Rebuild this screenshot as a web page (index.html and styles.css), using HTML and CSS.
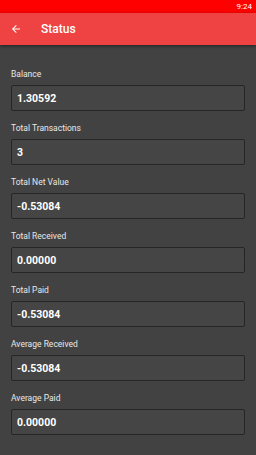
FILE: index.html
```html
<!DOCTYPE html>
<html>
<head>
<meta charset="utf-8">
<link rel="stylesheet" href="styles.css">
</head>
<body>
<div class="statusbar"><span class="time">9:24</span></div>
<div class="toolbar">
  <svg class="back" width="12" height="12" viewBox="0 0 24 24"><path d="M20 11H7.83l5.59-5.59L12 4l-8 8 8 8 1.41-1.41L7.83 13H20v-2z" fill="#fff"/></svg>
  <span class="title">Status</span>
</div>
<div class="content">
  <div class="field"><div class="label">Balance</div><div class="box">1.30592</div></div>
  <div class="field"><div class="label">Total Transactions</div><div class="box">3</div></div>
  <div class="field"><div class="label">Total Net Value</div><div class="box">-0.53084</div></div>
  <div class="field"><div class="label">Total Received</div><div class="box">0.00000</div></div>
  <div class="field"><div class="label">Total Paid</div><div class="box">-0.53084</div></div>
  <div class="field"><div class="label">Average Received</div><div class="box">-0.53084</div></div>
  <div class="field"><div class="label">Average Paid</div><div class="box">0.00000</div></div>
</div>
</body>
</html>
```
FILE: styles.css
```css
html, body { margin: 0; padding: 0; }
body {
  width: 256px;
  height: 455px;
  background: #424242;
  font-family: Roboto, "Noto Sans", sans-serif;
  color: #fff;
  overflow: hidden;
}
.statusbar {
  height: 13px;
  background: #ff0000;
  display: flex;
  justify-content: flex-end;
  align-items: center;
  padding-right: 4px;
}
.time { font-size: 8px; color: #fff; }
.toolbar {
  height: 32px;
  background: #ef4343;
  display: flex;
  align-items: center;
  box-shadow: 0 1px 3px rgba(0,0,0,0.5);
  position: relative;
}
.back { margin-left: 10px; }
.title { margin-left: 19px; font-size: 12px; font-weight: 500; }
.content {
  padding: 24px 11px 0 11px;
  display: flex;
  flex-direction: column;
  gap: 12px;
}
.field { display: flex; flex-direction: column; }
.label { font-size: 8.5px; color: #e8e8e8; height: 11px; line-height: 11px; margin-bottom: 5px; }
.box {
  height: 24px;
  border: 1px solid #262626;
  border-radius: 2px;
  background: #454545;
  display: flex;
  align-items: center;
  padding-left: 5px;
  font-size: 10.5px;
  font-weight: 700;
}
```
